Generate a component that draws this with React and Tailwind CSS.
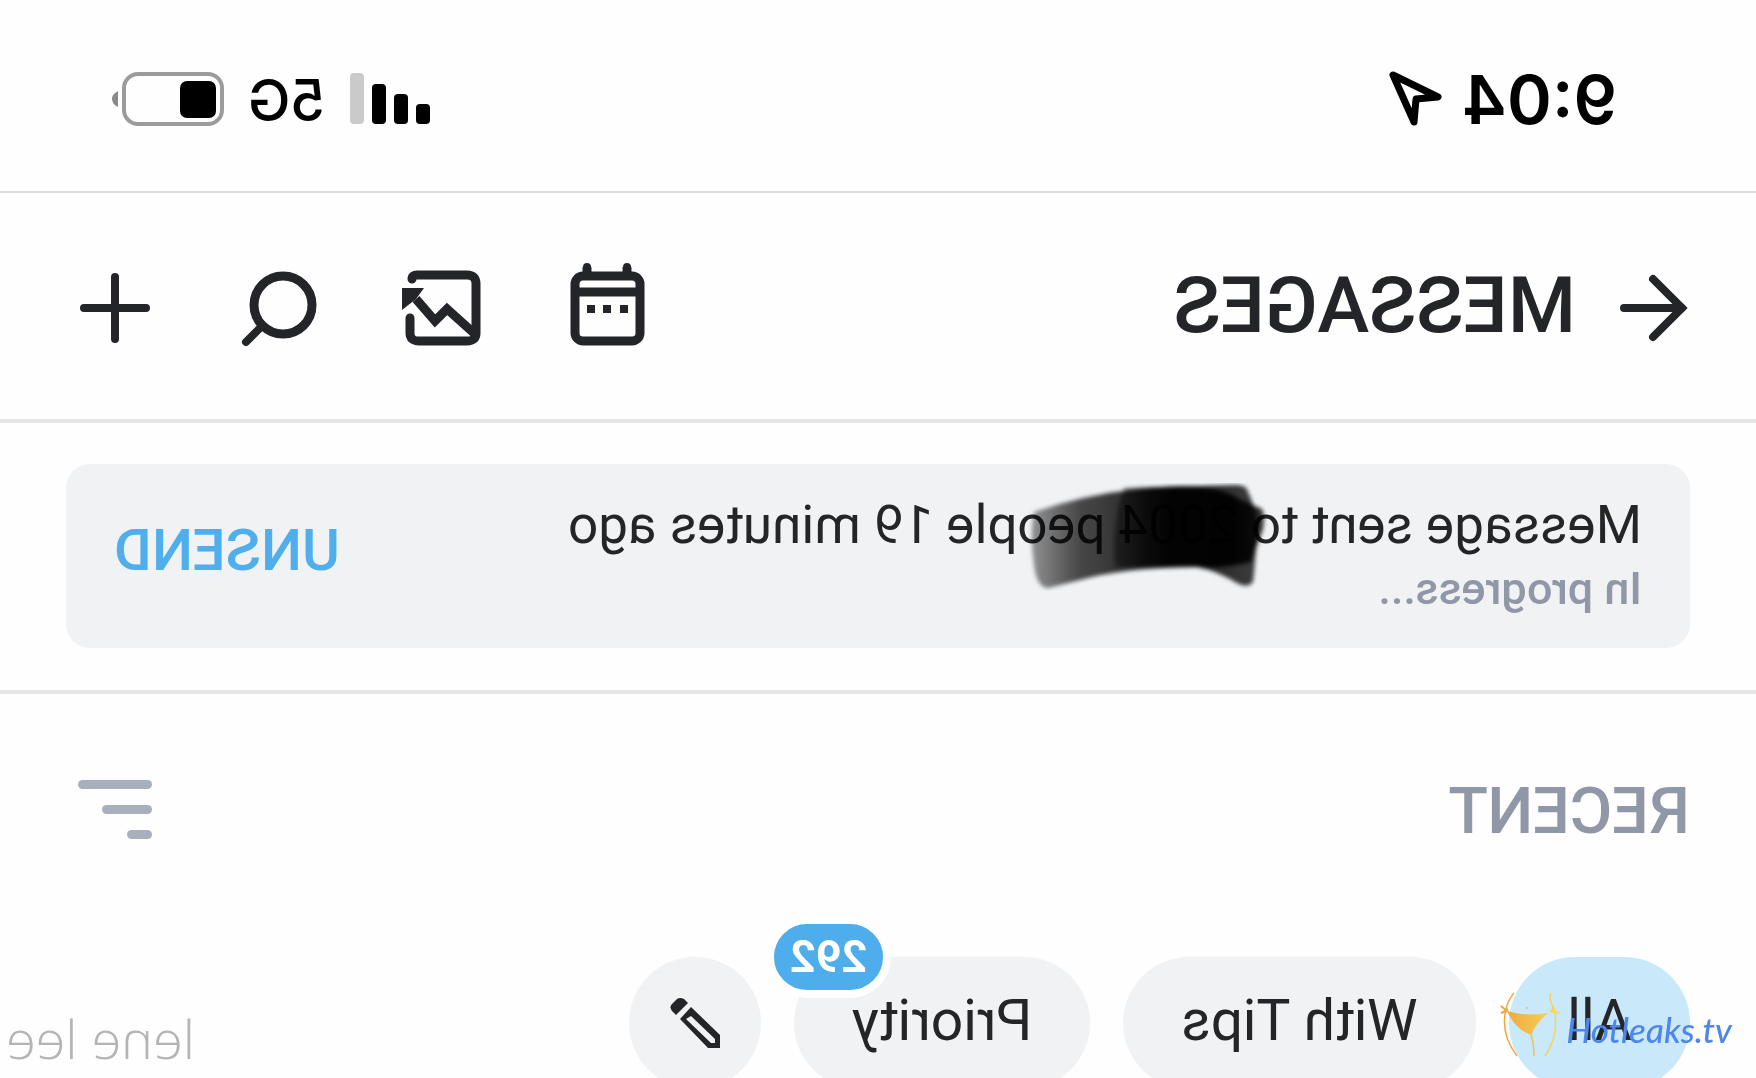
import React from 'react';

const ICON_PROPS = {
  viewBox: '0 0 98 98',
  fill: 'none',
  stroke: 'currentColor',
  strokeWidth: 9,
  strokeLinecap: 'round',
  'aria-hidden': true,
};

const ACTIONS = [
  {
    key: 'calendar',
    label: 'Calendar',
    drawing: (
      <>
        <rect x="16" y="17" width="65" height="65" rx="8" />
        <path d="M16 33H81M29 17V8M69 17V8" strokeLinecap="butt" />
        <path d="M29 12V8M69 12V8" strokeWidth="8" />
        <path d="M28 46h8v8h-8zM45 46h8v8h-8zM61 46h8v8h-8z" fill="currentColor" stroke="none" />
      </>
    ),
  },
  {
    key: 'media',
    label: 'Media',
    drawing: (
      <>
        <path d="M80 20Q80 16 75 16H25Q16 16 16 25V74Q16 82 25 82H73Q82 82 82 74V59" />
        <path d="M16 76L45 50L57 62L76 40" strokeLinecap="butt" />
        <path d="M68 29H90V51L76 40Z" fill="currentColor" stroke="none" />
      </>
    ),
  },
  {
    key: 'search',
    label: 'Search',
    drawing: (
      <>
        <circle cx="45" cy="46" r="29" />
        <path d="M66 67L82 83" strokeWidth="8" />
      </>
    ),
  },
  {
    key: 'new',
    label: 'New message',
    drawing: <path d="M18 49H80M49 18V80" strokeWidth="8" />,
  },
];

function StatusBar() {
  return (
    <div className="flex h-[193px] items-center justify-between border-b-2 border-[#dddddf] pt-1.5 pr-28 pl-[139px] font-['Inter',sans-serif] text-black">
      <div className="flex items-center gap-5">
        <span className="text-[68px] leading-none font-semibold">9:04</span>
        <svg width="54" height="56" viewBox="0 0 54 56" fill="none" stroke="currentColor" strokeWidth="7" strokeLinejoin="round" aria-hidden>
          <path d="M49 4L4 26L26 28L28 51Z" />
        </svg>
      </div>
      <div className="flex items-center gap-6">
        <div className="flex items-end gap-2">
          <span className="h-5 w-3.5 rounded-[4px] bg-black" />
          <span className="h-[30px] w-3.5 rounded-[4px] bg-black" />
          <span className="h-10 w-3.5 rounded-[4px] bg-black" />
          <span className="h-[51px] w-3.5 rounded-[4px] bg-[#cacaca]" />
        </div>
        <span className="pt-1 text-[57px] leading-none font-medium">5G</span>
        <svg width="112" height="54" viewBox="0 0 112 54" aria-hidden>
          <rect x="2" y="2" width="98" height="50" rx="14" fill="none" stroke="#9b9b9b" strokeWidth="4" />
          <rect x="8" y="9" width="36" height="37" rx="7" fill="#000" />
          <path d="M106 19V35Q112 32 112 27Q112 22 106 19Z" fill="#8a8a8a" />
        </svg>
      </div>
    </div>
  );
}

function Header() {
  return (
    <header className="flex h-[230px] items-center justify-between border-b-4 border-[#e4e6e8] px-[66px] pt-1">
      <div className="flex items-center gap-[42px]">
        <button type="button" aria-label="Back">
          <svg width="72" height="72" viewBox="0 0 72 72" fill="none" stroke="currentColor" strokeWidth="8" strokeLinecap="round" aria-hidden>
            <path d="M66 36H8M37 7L8 36L37 65" />
          </svg>
        </button>
        <h1 className="pb-1 text-[78px] leading-none font-medium">MESSAGES</h1>
      </div>
      <div className="flex items-center gap-[66px]">
        {ACTIONS.map(action => (
          <button key={action.key} type="button" aria-label={action.label}>
            <svg {...ICON_PROPS} className="size-[98px]">{action.drawing}</svg>
          </button>
        ))}
      </div>
    </header>
  );
}

function Scribble() {
  return (
    <svg
      className="absolute -top-1.5 -left-[30px] max-w-none"
      width="240"
      height="108"
      viewBox="-3 -2 240 108"
      aria-hidden
    >
      <defs>
        <linearGradient id="ink">
          <stop offset="0" stopOpacity="0.8" />
          <stop offset="0.15" stopOpacity="0.97" />
          <stop offset="0.5" stopOpacity="0.85" />
          <stop offset="0.8" stopOpacity="0.7" />
          <stop offset="1" stopOpacity="0.4" />
        </linearGradient>
        <linearGradient id="ink-over">
          <stop offset="0" stopOpacity="0.75" />
          <stop offset="0.6" stopOpacity="0.9" />
          <stop offset="1" stopOpacity="0.4" />
        </linearGradient>
        <filter id="soft">
          <feGaussianBlur stdDeviation="2" />
        </filter>
      </defs>
      <g filter="url(#soft)">
        <path d="M231 27Q182 10 127 4Q90 0 68 2Q40 4 26 14L3 24Q0 30 2 44L14 77Q40 84 68 82Q130 82 173 92L217 103Q226 103 230 87Q236 50 231 27Z" fill="url(#ink)" />
        <path d="M141 3L29 0Q18 0 17 7Q6 30 8 50Q10 80 12 97Q18 104 28 98Q48 86 68 82H150Q154 40 141 3Z" fill="url(#ink-over)" />
      </g>
    </svg>
  );
}

function SendNotice() {
  return (
    <section className="border-b-4 border-[#e4e6e8] px-[66px] pt-[41px] pb-[42px]">
      <div className="flex h-[184px] items-center justify-between rounded-[24px] bg-[#f1f2f4] pr-12 pl-12">
        <div className="pb-1.5">
          <p className="text-[53px] leading-[72px] whitespace-nowrap">
            Message sent to{' '}
            <span className="relative inline-block">2004<Scribble /></span>{' '}
            people 19 minutes ago
          </p>
          <p className="text-[45px] leading-[56px] font-medium text-[#9098a7]">In progress...</p>
        </div>
        <button type="button" className="pb-3 text-[58px] leading-none font-medium text-[#50aeec]">UNSEND</button>
      </div>
    </section>
  );
}

function Filters() {
  return (
    <div className="flex items-start justify-between pr-1.5 pl-[66px]">
      <div className="flex gap-[33px] text-[57px] leading-none">
        <button type="button" className="h-[132px] rounded-full bg-[#c9e9fa] px-[58px] pb-1.5">All</button>
        <button type="button" className="h-[132px] rounded-full bg-[#f1f2f4] px-[58px] pb-1.5">With Tips</button>
        <button type="button" className="relative h-[132px] rounded-full bg-[#f1f2f4] px-[58px] pb-1.5">
          Priority
          <span className="absolute -top-[41px] -right-7 rounded-full border-8 border-white bg-[#4eadeb] px-4 text-[45px] leading-[66px] font-bold text-white">292</span>
        </button>
        <button type="button" aria-label="Edit lists" className="flex size-[132px] items-center justify-center rounded-full bg-[#f1f2f4]">
          <svg width="50" height="50" viewBox="0 0 50 50" fill="currentColor" fillRule="evenodd" aria-hidden>
            <path d="M29 9L0 37V50H12L40 21ZM29 18L5 41V45H9L34 21Z" />
            <path d="M32 5L44 17L48 13Q51 9 48 6L43 1Q40-1 36 1Z" />
          </svg>
        </button>
      </div>
      <span className="pt-[45px] font-['Open_Sans',sans-serif] text-[54px] leading-[72px] font-light text-[#b4b4b4]">lene lee</span>
    </div>
  );
}

function Watermark() {
  return (
    <div className="absolute right-6 bottom-5 flex items-center gap-1">
      <svg width="62" height="66" viewBox="0 0 62 66" fill="none" stroke="url(#gold)" aria-hidden>
        <defs>
          <linearGradient id="gold" gradientUnits="userSpaceOnUse" x1="0" x2="62" y1="0" y2="0">
            <stop offset="0" stopColor="#f0a23c" />
            <stop offset="1" stopColor="#f7dc5c" />
          </linearGradient>
        </defs>
        <path d="M14 1Q8 8 6 17Q0 42 17 64M51 1Q48 7 54 16Q60 42 45 64M31 42Q34 52 34 64" strokeWidth="1.5" />
        <path d="M7 19Q27 25 48 21Q36 31 31 43Q15 37 7 19Z" fill="url(#gold)" stroke="none" />
        <path d="M1 14L7 19L1 21M3 20L8 17M50 19L60 21M53 14L52 20" strokeWidth="2" />
        <circle cx="27" cy="16" r="1" fill="url(#gold)" stroke="none" />
      </svg>
      <span className="pt-2 font-['Lato',sans-serif] text-[35px] leading-none font-medium text-[#4f86ec] italic">Hotleaks.tv</span>
    </div>
  );
}

export default function App() {
  return (
    <div className="relative h-screen overflow-hidden bg-[#fefefe]">
      {/* the whole screen is shown flipped, only the watermark reads normally */}
      <main className="-scale-x-100 font-['Roboto',sans-serif] text-[#232528]">
        <StatusBar />
        <Header />
        <SendNotice />
        <section>
          <div className="flex items-center justify-between pt-[78px] pr-[78px] pb-[110px] pl-[66px]">
            <h2 className="pt-1 text-[65px] leading-[71px] font-medium text-[#9098a7]">RECENT</h2>
            <button type="button" aria-label="Sort" className="flex w-[74px] flex-col gap-4">
              <span className="h-[9px] w-full rounded-full bg-[#a8b0bd]" />
              <span className="h-[9px] w-[50px] rounded-full bg-[#a8b0bd]" />
              <span className="h-[9px] w-[25px] rounded-full bg-[#a8b0bd]" />
            </button>
          </div>
          <Filters />
        </section>
      </main>
      <Watermark />
    </div>
  );
}
